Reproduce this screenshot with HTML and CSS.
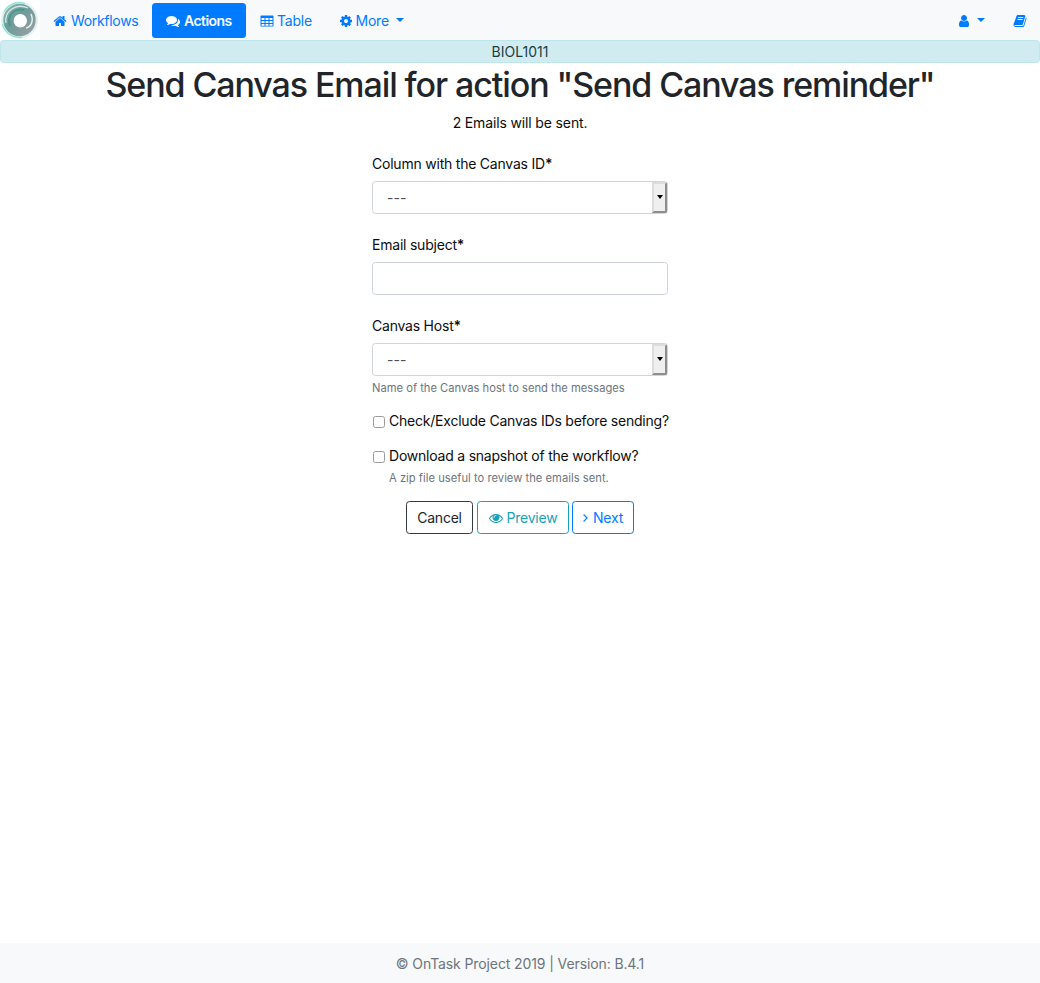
FILE: index.html
```html
<!DOCTYPE html>
<html lang="en">
<head>
<meta charset="utf-8">
<title>OnTask</title>
<link rel="stylesheet" href="styles.css">
</head>
<body>
<nav class="navbar">
  <svg class="logo" viewBox="0 0 40 40">
    <defs>
      <linearGradient id="ring" x1="0" y1="0" x2="1" y2="1">
        <stop offset="0" stop-color="#9dbdbc"/><stop offset=".4" stop-color="#6a9c98"/><stop offset="1" stop-color="#a29ea5"/>
      </linearGradient>
    </defs>
    <rect width="40" height="40" fill="#fff"/>
    <circle cx="19.500" cy="20" r="18.500" fill="#dcf3f0"/>
    <circle cx="19.500" cy="20" r="16.200" fill="url(#ring)"/>
    <path d="M4 12A17.500 17.500 0 0 1 25 3.500M2.500 24A17.500 17.500 0 0 0 22 37.300" fill="none" stroke="#8fe3d5" stroke-width="1.300"/>
    <path d="M6 23C4 10 17 3 28 8" fill="none" stroke="#d8e7e6" stroke-width="1.300"/>
    <path d="M10 26C6 15 15 8 24 10" fill="none" stroke="#4a968d" stroke-width="2"/>
    <path d="M31 14C34 21 31 27 26 28" fill="none" stroke="#e5f3f1" stroke-width="1.500"/>
    <circle cx="20.300" cy="20.700" r="6.700" fill="#fff"/>
  </svg>
  <a class="nav-link workflows"><svg class="icon" viewBox="0 0 1792 1792"><path d="M1472 992v480q0 26-19 45t-45 19h-384v-384h-256v384h-384q-26 0-45-19t-19-45v-480q0-1 .5-3t.5-3l575-474 575 474q1 2 1 6zm223-69l-62 74q-8 9-21 11h-3q-13 0-21-7l-692-577-692 577q-12 8-24 7-13-2-21-11l-62-74q-8-10-7-23.500t11-21.500l719-599q32-26 76-26t76 26l244 204v-195q0-14 9-23t23-9h192q14 0 23 9t9 23v408l219 182q10 8 11 21.500t-7 23.500z"/></svg><span>Workflows</span></a>
  <a class="nav-link actions"><svg class="icon" viewBox="0 0 1792 1792"><path d="M1408 768q0 139-94 257t-256.500 186.500-353.500 68.500q-86 0-176-16-124 88-278 128-36 9-86 16h-3q-11 0-20.500-8t-11.500-21q-1-3-1-6.500t.5-6.500 2-6l2.500-5 3.500-5.500 4-5 4.500-5 4-4.500q5-6 23-25t26-29.500 22.500-29 25-38.500 20.500-44q-124-72-195-177t-71-224q0-139 94-257t256.500-186.500 353.500-68.500 353.500 68.500 256.500 186.500 94 257zm384 256q0 120-71 224.500t-195 176.500q10 24 20.500 44t25 38.500 22.500 29 26 29.500 23 25q1 1 4 4.500t4.500 5 4 5 3.500 5.500l2.500 5 2 6 .5 6.500-1 6.500q-3 14-13 22t-22 7q-50-7-86-16-154-40-278-128-90 16-176 16-271 0-472-132 58 4 88 4 161 0 309-45t264-129q125-92 192-212t67-254q0-77-23-152 129 71 204 178t75 230z"/></svg><span>Actions</span></a>
  <a class="nav-link table"><svg class="icon" viewBox="0 0 14 14"><path fill-rule="evenodd" d="M1.300 1.500h11.400q.8 0 .8.800v9.400q0 .8-.8.800h-11.400q-.8 0-.8-.8v-9.400q0-.8.800-.8zM1.500 4v2h3v-2zm4 0v2h3v-2zm4 0v2h3v-2zM1.500 7v2h3v-2zm4 0v2h3v-2zm4 0v2h3v-2zM1.500 10v1.700h3v-1.700zm4 0v1.700h3v-1.700zm4 0v1.700h3v-1.700z"/></svg><span>Table</span></a>
  <a class="nav-link more"><svg class="icon" viewBox="0 0 1792 1792"><path d="M1152 896q0-106-75-181t-181-75-181 75-75 181 75 181 181 75 181-75 75-181zm512-109v222q0 12-8 23t-20 13l-185 28q-19 54-39 91 35 50 107 138 10 12 10 25t-9 23q-27 37-99 108t-94 71q-12 0-26-9l-138-108q-44 23-91 38-16 136-29 186-7 28-36 28h-222q-14 0-24.500-8.500t-11.500-21.500l-28-184q-49-16-90-37l-141 107q-10 9-25 9-14 0-25-11-126-114-165-168-7-10-7-23 0-12 8-23 15-21 51-66.500t54-70.500q-27-50-41-99l-183-27q-13-2-21-12.500t-8-23.500v-222q0-12 8-23t19-13l186-28q14-46 39-92-40-57-107-138-10-12-10-24 0-10 9-23 26-36 98.500-107.500t94.500-71.500q13 0 26 10l138 107q44-23 91-38 16-136 29-186 7-28 36-28h222q14 0 24.500 8.500t11.500 21.500l28 184q49 16 90 37l142-107q9-9 24-9 13 0 25 10 129 119 165 170 7 8 7 22 0 12-8 23-15 21-51 66.500t-54 70.500q26 50 41 98l183 28q13 2 21 12.500t8 23.500z"/></svg><span>More</span><i class="caret"></i></a>
  <div class="nav-right">
    <a class="nav-link user"><svg class="icon" viewBox="0 0 1792 1792"><path d="M1536 1399q0 109-62.500 187t-150.500 78h-854q-88 0-150.500-78t-62.500-187q0-85 8.500-160.500t31.500-152 58.500-131 94-89 134.500-34.500q131 128 313 128t313-128q76 0 134.500 34.500t94 89 58.500 131 31.500 152 8.500 160.500zm-256-887q0 159-112.500 271.500t-271.500 112.500-271.500-112.500-112.500-271.500 112.500-271.500 271.500-112.500 271.500 112.500 112.500 271.500z"/></svg><i class="caret"></i></a>
    <a class="nav-link book"><svg class="icon" viewBox="0 0 1792 1792"><path d="M1703 478q40 57 18 129l-275 906q-19 64-76.500 107.500t-122.500 43.500h-923q-77 0-148.500-53.500t-99.500-131.500q-24-67-2-127 0-4 3-27t4-37q1-8-3-21.500t-3-19.500q2-11 8-21t16.500-23.500 16.500-23.500q23-38 45-91.500t30-91.500q3-10 .5-30t-.5-28q3-11 17-28t17-23q21-36 42-92t25-90q1-9-2.500-32t.5-28q4-13 22-30.500t22-22.500q19-26 42.500-84.500t27.500-96.500q1-8-3-25.500t-2-26.500q2-8 9-18t18-23 17-21q8-12 16.500-30.500t15-35 16-36 19.500-32 26.500-23.500 36-11.500 47.500 5.500l-1 3q38-9 51-9h761q74 0 114 56t18 130l-274 906q-36 119-71.500 153.500t-128.500 34.500h-869q-27 0-38 15-11 16-1 43 24 70 144 70h923q29 0 56-15.500t35-41.500l300-987q7-22 5-57 38 15 59 43zm-1064 2q-4 13 2 22.500t20 9.500h608q13 0 25.500-9.500t16.500-22.500l21-64q4-13-2-22.500t-20-9.500h-608q-13 0-25.500 9.500t-16.500 22.500zm-83 256q-4 13 2 22.500t20 9.500h608q13 0 25.500-9.500t16.500-22.500l21-64q4-13-2-22.500t-20-9.500h-608q-13 0-25.500 9.500t-16.500 22.500z"/></svg></a>
  </div>
</nav>
<div class="workflow-name"><span>BIOL1011</span></div>
<main class="content">
  <h1 class="title">Send Canvas Email for action "Send Canvas reminder"</h1>
  <p class="summary">2 Emails will be sent.</p>
  <form class="form">
    <div class="group">
      <label class="label">Column with the Canvas ID<b>*</b></label>
      <div class="control select"><span>---</span><i class="select-button"></i></div>
    </div>
    <div class="group">
      <label class="label">Email subject<b>*</b></label>
      <div class="control"></div>
    </div>
    <div class="group host">
      <label class="label">Canvas Host<b>*</b></label>
      <div class="control select"><span>---</span><i class="select-button"></i></div>
      <small class="help">Name of the Canvas host to send the messages</small>
    </div>
    <div class="check first"><i class="box"></i><label>Check/Exclude Canvas IDs before sending?</label></div>
    <div class="check"><i class="box"></i><label>Download a snapshot of the workflow?</label></div>
    <small class="help indented">A zip file useful to review the emails sent.</small>
    <div class="buttons">
      <a class="btn cancel"><span>Cancel</span></a>
      <a class="btn preview"><svg class="icon" viewBox="0 0 1792 1792"><path d="M1664 960q-152-236-381-353 61 104 61 225 0 185-131.500 316.500t-316.500 131.500-316.500-131.500-131.500-316.500q0-121 61-225-229 117-381 353 133 205 333.500 326.500t434.500 121.500 434.500-121.500 333.500-326.500zm-720-384q0-20-14-34t-34-14q-125 0-214.500 89.500t-89.500 214.500q0 20 14 34t34 14 34-14 14-34q0-86 61-147t147-61q20 0 34-14t14-34zm848 384q0 34-20 69-140 230-376.500 368.500t-499.500 138.500-499.500-139-376.500-368q-20-35-20-69t20-69q140-229 376.500-368t499.500-139 499.500 139 376.500 368q20 35 20 69z"/></svg><span>Preview</span></a>
      <a class="btn next"><svg class="chevron" viewBox="0 0 5 14"><path d="M.6 3.500L4.100 7L.6 10.500"/></svg><span>Next</span></a>
    </div>
  </form>
</main>
<footer class="footer"><span>© OnTask Project 2019 | Version: B.4.1</span></footer>
</body>
</html>
```
FILE: styles.css
```css
* { box-sizing: border-box; }
body {
  margin: 0;
  height: 983px;
  display: flex;
  flex-direction: column;
  font: 14px/21px Inter, "Liberation Sans", sans-serif;
  letter-spacing: -.22px;
  color: #212529;
  background: #fff;
}
span, label, small { white-space: nowrap; }
.navbar { display: flex; height: 40px; align-items: center; background: #f8f9fa; }
.logo { width: 40px; height: 40px; flex: none; }
.nav-link { display: flex; align-items: center; height: 35px; padding: 1px 14px 0; color: #007bff; }
.icon { width: 14px; height: 14px; fill: currentColor; flex: none; }
.nav-link span { margin-left: 4px; }
.workflows { width: 112px; padding-left: 13px; letter-spacing: -.32px; }
.actions { width: 94px; background: #007bff; color: #fff; border-radius: 3.500px; font-weight: 600; letter-spacing: -.55px; }
.table { width: 79px; padding-left: 13.500px; }
.table span { margin-left: 3.500px; }
.more { padding-left: 13.500px; }
.more span { margin-left: 3px; }
.caret { border: 4px solid transparent; border-top-color: currentColor; border-bottom: 0; margin: -2px 0 0 7.500px; }
.nav-right { margin-left: auto; display: flex; }
.user { padding-right: 13.500px; }
.user .caret { margin-left: 6px; }
.book { padding-right: 13.500px; }
.workflow-name {
  height: 23px;
  border: 1px solid #bee5eb;
  border-radius: 3.500px;
  background: #d1ecf1;
  letter-spacing: 0;
  color: #1a3d44;
  text-align: center;
}
.content { flex: 1; display: flex; flex-direction: column; align-items: center; }
.title { margin: 0; height: 49px; font-size: 34px; line-height: 43px; font-weight: 500; letter-spacing: -1.090px; white-space: nowrap; }
.summary { margin: 0; height: 41px; color: #0b0d0f; letter-spacing: -.14px; }
.form { width: 296px; color: #0b0d0f; }
.group { height: 81px; }
.group.host { height: 95px; }
.label { display: block; height: 28px; }
.label b { font-weight: 600; letter-spacing: -1px; }
.control { height: 33px; border: 1px solid #ced4da; border-radius: 3.500px; background: #fff; letter-spacing: 0; }
.select { display: flex; justify-content: space-between; padding-left: 14px; color: #495057; line-height: 32px; }
.select-button {
  width: 15px;
  border: 2px solid;
  border-color: #dcdcdc #8e8e8e #8e8e8e #dcdcdc;
  border-radius: 0 2px 2px 0;
  background: #efefef;
  display: flex;
  align-items: center;
  justify-content: center;
  padding-bottom: 1px;
}
.select-button::after { content: ""; border: 3.500px solid transparent; border-top: 4px solid #000; border-bottom: 0; }
.help { display: block; font-size: 11.200px; line-height: 17px; color: #6c757d; margin-top: 4px; letter-spacing: 0; }
.check { display: flex; height: 21px; align-items: center; }
.check.first { margin-bottom: 14px; }
.box { width: 12px; height: 12px; margin: 2px 4px 0 1px; border: 1px solid #9b9b9b; border-radius: 2.500px; background: #fff; flex: none; }
.help.indented { margin: 4px 0 0 17px; letter-spacing: .02px; }
.buttons { display: flex; justify-content: center; gap: 4px; margin-top: 14px; }
.btn { height: 33px; display: flex; align-items: center; justify-content: center; border: 1px solid; border-radius: 3.500px; }
.btn .icon { margin-right: 4px; }
.cancel { width: 67px; color: #343a40; }
.cancel span { color: #212529; }
.preview { width: 92px; color: #17a2b8; }
.next { width: 62px; color: #007bff; margin-left: -1px; }
.chevron { width: 5px; height: 14px; margin-right: 5px; fill: none; stroke: currentColor; stroke-width: 1.100; }
.footer { height: 40px; background: #f8f9fa; color: #6c757d; text-align: center; line-height: 42px; letter-spacing: -.11px; }
```
